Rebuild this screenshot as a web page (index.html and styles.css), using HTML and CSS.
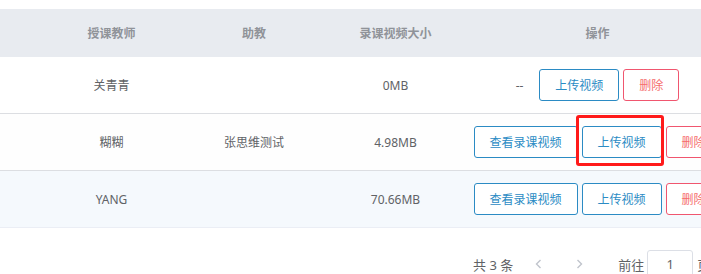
FILE: index.html
```html
<!DOCTYPE html>
<html lang="zh-CN">
<head>
    <meta charset="UTF-8">
    <title>录课视频</title>
    <link rel="stylesheet" href="styles.css">
</head>
<body>
<div class="page">
    <table class="lista">
        <colgroup>
            <col class="c0">
            <col class="c1">
            <col class="c2">
            <col class="c3">
            <col class="c4">
        </colgroup>
        <thead>
        <tr>
            <th></th>
            <th>授课教师</th>
            <th>助教</th>
            <th>录课视频大小</th>
            <th>操作</th>
        </tr>
        </thead>
        <tbody>
        <tr>
            <td></td>
            <td>关青青</td>
            <td></td>
            <td>0MB</td>
            <td>
                <div class="akcje">
                    <span class="brak">--</span>
                    <button class="btn">上传视频</button>
                    <button class="btn btn-red">删除</button>
                </div>
            </td>
        </tr>
        <tr class="wiersz-b">
            <td></td>
            <td>糊糊</td>
            <td>张思维测试</td>
            <td>4.98MB</td>
            <td>
                <div class="akcje">
                    <button class="btn btn-wide">查看录课视频</button>
                    <span class="zaznacz"><button class="btn">上传视频</button></span>
                    <button class="btn btn-red">删除</button>
                </div>
            </td>
        </tr>
        <tr class="wiersz-c">
            <td></td>
            <td>YANG</td>
            <td></td>
            <td>70.66MB</td>
            <td>
                <div class="akcje">
                    <button class="btn btn-wide">查看录课视频</button>
                    <button class="btn">上传视频</button>
                    <button class="btn btn-red">删除</button>
                </div>
            </td>
        </tr>
        </tbody>
    </table>

    <div class="stronicowanie">
        <span class="suma">共 3 条</span>
        <button class="strzalka">
            <svg width="7" height="10" viewBox="0 0 7 10"><polyline points="5.5,1 1.5,5 5.5,9" fill="none" stroke="#c0c4cc" stroke-width="1.4"/></svg>
        </button>
        <ul class="strony"></ul>
        <button class="strzalka">
            <svg width="7" height="10" viewBox="0 0 7 10"><polyline points="1.5,1 5.5,5 1.5,9" fill="none" stroke="#c0c4cc" stroke-width="1.4"/></svg>
        </button>
        <span class="skok">前往<input class="nr" type="text" value="1">页</span>
    </div>
</div>
</body>
</html>
```

FILE: styles.css
```css
html, body {
    margin: 0;
    background: #fff;
    overflow: hidden;
}
body {
    font-family: "Noto Sans", "Noto Sans CJK SC", sans-serif;
    font-size: 12px;
    color: #606266;
}
.page {
    width: 729px;
    padding-top: 9px;
}
.lista {
    width: 729px;
    table-layout: fixed;
    border-collapse: collapse;
}
.c0 { width: 40px; }
.c1 { width: 143px; }
.c2 { width: 142px; }
.c3 { width: 141px; }
.c4 { width: 263px; }
.lista th {
    height: 48px;
    padding: 0;
    background: #e8ebf0;
    color: #909399;
    font-weight: 600;
    text-align: center;
}
.lista td {
    height: 56px;
    padding: 0;
    text-align: center;
    border-bottom: 1px solid #dcdee2;
}
.wiersz-b td {
    background: #fefefe;
}
.wiersz-c td {
    background: #f5f9fd;
    border-bottom-color: #ebeef5;
}
.akcje {
    display: flex;
    justify-content: center;
    align-items: center;
    gap: 4px;
}
.brak {
    margin-right: 12px;
    color: #606266;
}
.btn {
    height: 32px;
    width: 80px;
    padding: 0;
    border: 1px solid #2b8bc4;
    border-radius: 3px;
    background: #fff;
    color: #2b8bc4;
    font-family: inherit;
    font-size: 12px;
}
.btn-wide {
    width: 104px;
}
.btn-red {
    width: 56px;
    border-color: #f0566f;
    color: #f56c6c;
}
.zaznacz {
    position: relative;
    display: inline-flex;
}
.zaznacz::after {
    content: "";
    position: absolute;
    left: -6px;
    right: -2px;
    top: -11px;
    bottom: -8px;
    border: 3px solid #ff1a1a;
    border-radius: 3px;
}
.stronicowanie {
    display: flex;
    align-items: center;
    height: 28px;
    margin-top: 22px;
    padding-left: 473px;
    color: #606266;
    font-size: 13px;
    white-space: nowrap;
}
.suma {
    margin-right: 10px;
}
.strzalka {
    width: 30px;
    height: 28px;
    padding: 0;
    border: 0;
    background: #fff;
    display: flex;
    align-items: center;
    justify-content: center;
}
.strony {
    margin: 0;
    padding: 0;
    width: 11px;
}
.skok {
    margin-left: 24px;
    display: flex;
    align-items: center;
}
.nr {
    width: 46px;
    height: 28px;
    box-sizing: border-box;
    margin: 0 4px 0 3px;
    border: 1px solid #dcdfe6;
    border-radius: 3px;
    text-align: center;
    font-family: inherit;
    font-size: 13px;
    color: #606266;
}
```
